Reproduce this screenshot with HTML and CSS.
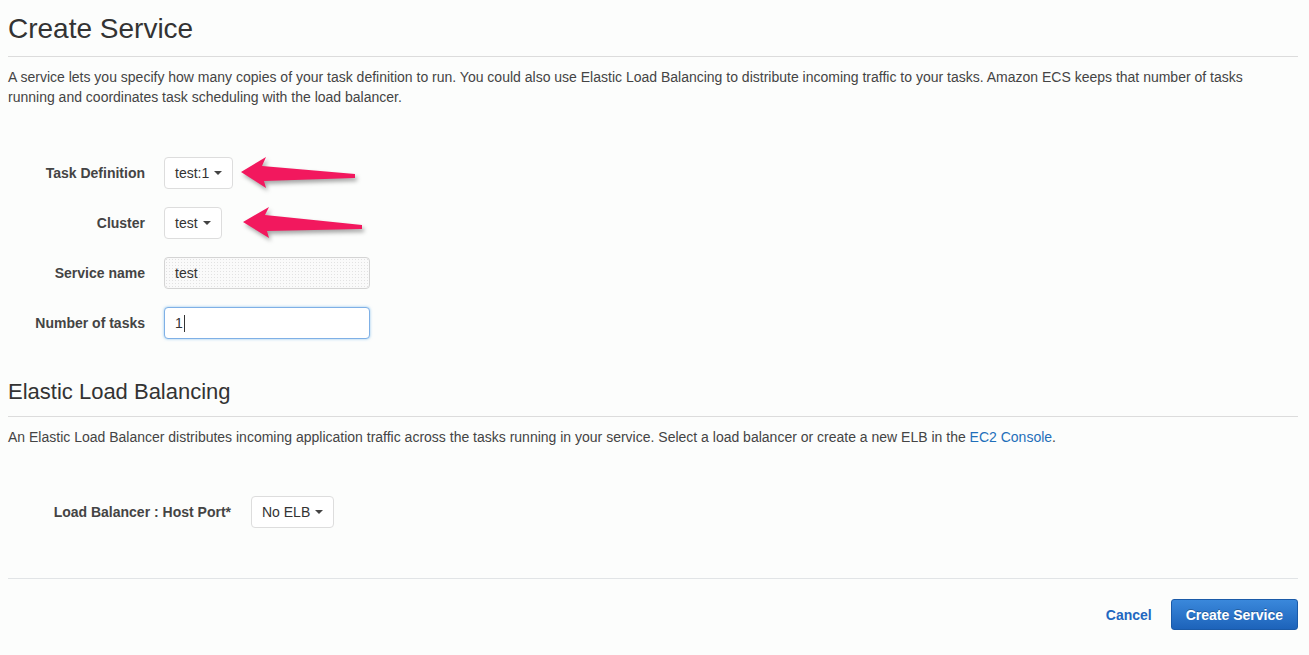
FILE: index.html
```html
<!DOCTYPE html>
<html lang="en">

<head>
    <meta charset="UTF-8">
    <meta name="viewport" content="width=device-width, initial-scale=1.0">
    <title>Create Service</title>
    <link rel="stylesheet" href="styles.css">
</head>

<body>
    <div class="page">
        <div class="section-head first">
            <h1>Create Service</h1>
        </div>
        <p class="intro">A service lets you specify how many copies of your task definition to run. You could also use Elastic Load Balancing to distribute incoming traffic to your tasks. Amazon ECS keeps that number of tasks running and coordinates task scheduling with the load balancer.</p>

        <div class="form">
            <div class="form-row">
                <span class="label">Task Definition</span>
                <button class="dropdown">test:1 <span class="caret"></span></button>
            </div>
            <div class="form-row">
                <span class="label">Cluster</span>
                <button class="dropdown">test <span class="caret"></span></button>
            </div>
            <div class="form-row">
                <span class="label">Service name</span>
                <div class="input readonly">test</div>
            </div>
            <div class="form-row">
                <span class="label">Number of tasks</span>
                <div class="input focused">1<span class="cursor"></span></div>
            </div>
        </div>

        <div class="section-head">
            <h2>Elastic Load Balancing</h2>
        </div>
        <p class="intro">An Elastic Load Balancer distributes incoming application traffic across the tasks running in your service. Select a load balancer or create a new ELB in the <a href="#">EC2 Console</a>.</p>

        <div class="form lb">
            <div class="form-row">
                <span class="label">Load Balancer : Host Port*</span>
                <button class="dropdown">No ELB <span class="caret"></span></button>
            </div>
        </div>

        <div class="footer">
            <a href="#" class="cancel">Cancel</a>
            <button class="primary">Create Service</button>
        </div>
    </div>

    <!-- annotation arrows drawn over the screenshot -->
    <svg class="arrows" width="400" height="260" viewBox="0 0 400 260">
        <polygon points="241,172 266,157 262,166 355,174 355,178 264,181 266,188" />
        <polygon points="243,222 269,207 265,215 362,225 362,229 267,231 269,238" />
    </svg>
</body>

</html>
```

FILE: styles.css
```css
body {
    margin: 0;
    background-color: #fcfdfc;
    color: #444;
    font-family: "Liberation Sans", Arial, sans-serif;
    font-size: 14px;
    position: relative;
}

.page {
    padding: 0 11px 40px 8px;
}

.section-head {
    border-bottom: 1px solid #dcdcdc;
    padding-bottom: 10px;
    padding-top: 39px;
}

.section-head.first {
    padding-top: 12px;
}

h1 {
    margin: 0;
    font-size: 28px;
    line-height: 34px;
    font-weight: normal;
    color: #333;
}

h2 {
    margin: 0;
    font-size: 22px;
    line-height: 28px;
    font-weight: normal;
    color: #333;
}

.intro {
    margin: 10px 40px 0 0;
    line-height: 20px;
    color: #444;
}

.intro a {
    color: #1f6fba;
    text-decoration: none;
}

.form {
    display: flex;
    flex-direction: column;
    gap: 18px;
    margin-top: 50px;
}

.form-row {
    display: flex;
    align-items: center;
    gap: 19px;
    height: 32px;
}

.label {
    width: 137px;
    text-align: right;
    font-weight: bold;
    color: #444;
}

.lb {
    margin-top: 49px;
    padding-bottom: 50px;
    border-bottom: 1px solid #e1e4e6;
}

.lb .label {
    width: 223px;
}

.lb .form-row {
    gap: 20px;
}

.dropdown {
    height: 32px;
    padding: 0 10px;
    border: 1px solid #ddd;
    border-radius: 4px;
    background: #fff;
    font-family: inherit;
    font-size: 14px;
    color: #333;
    display: flex;
    align-items: center;
    gap: 5px;
}

.caret {
    width: 0;
    height: 0;
    border-left: 4px solid transparent;
    border-right: 4px solid transparent;
    border-top: 4px solid #444;
}

.input {
    box-sizing: border-box;
    width: 206px;
    height: 32px;
    padding: 0 10px;
    border: 1px solid #ddd;
    border-radius: 4px;
    display: flex;
    align-items: center;
    color: #333;
    background: #fff;
}

.input.readonly {
    border-color: #d4d4d4;
    background-color: #fafafa;
    background-image: radial-gradient(#e2e2e2 0.6px, transparent 0.8px);
    background-size: 3px 3px;
}

.input.focused {
    border-color: #7fb0e6;
    box-shadow: 0 0 3px rgba(102, 175, 233, 0.7);
}

.cursor {
    display: inline-block;
    width: 1px;
    height: 17px;
    background: #333;
    margin-left: 1px;
}

.footer {
    display: flex;
    justify-content: flex-end;
    align-items: center;
    gap: 19px;
    margin-top: 20px;
}

.cancel {
    color: #2267c0;
    font-weight: bold;
    text-decoration: none;
}

.primary {
    height: 31px;
    padding: 0 14px;
    border: 1px solid #1a5aa8;
    border-radius: 3px;
    background: linear-gradient(#3a88db, #1d63ba);
    color: #fff;
    font-family: inherit;
    font-size: 14px;
    font-weight: bold;
    text-shadow: 0 -1px 0 rgba(0, 0, 0, 0.25);
}

.arrows {
    position: absolute;
    left: 0;
    top: 0;
    pointer-events: none;
    filter: drop-shadow(2px 3px 2px rgba(0, 0, 0, 0.35));
}

.arrows polygon {
    fill: #f2185e;
}
```
